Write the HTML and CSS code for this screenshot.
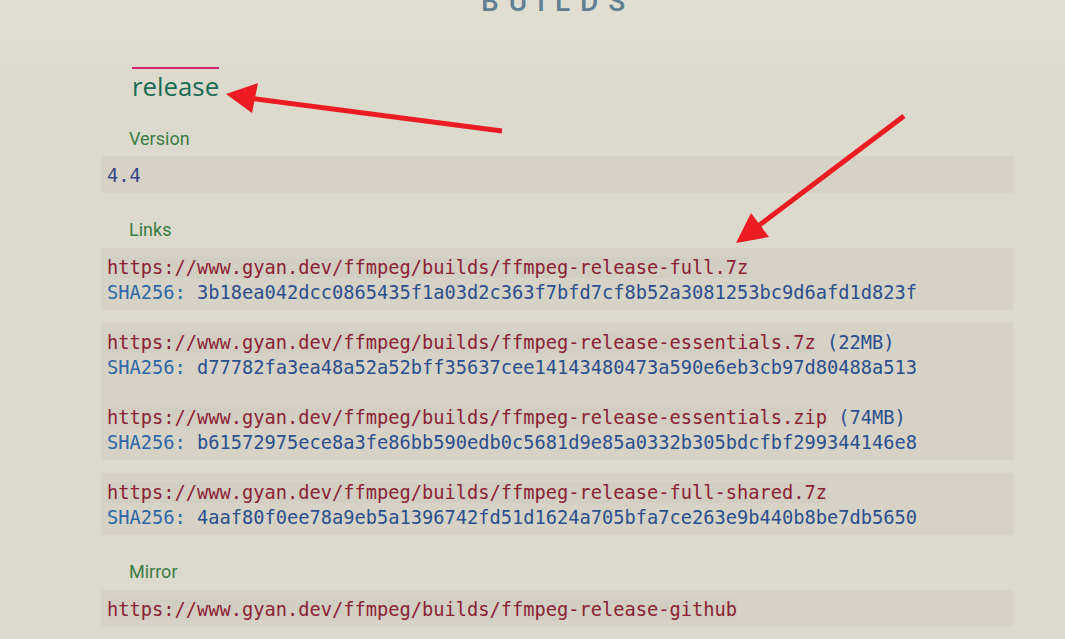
FILE: index.html
```html
<!DOCTYPE html>
<html lang="en">
<head>
<meta charset="utf-8">
<title>Builds</title>
<link rel="stylesheet" href="styles.css">
</head>
<body>
<header class="band">
  <h1 class="site-title">BUILDS</h1>
</header>
<main class="content">
  <h2 class="heading">release</h2>

  <div class="label first">Version</div>
  <div class="block"><div class="line version">4.4</div></div>

  <div class="label">Links</div>
  <div class="block">
    <div class="line"><a class="link">https://www.gyan.dev/ffmpeg/builds/ffmpeg-release-full.7z</a></div>
    <div class="line"><span class="sha">SHA256:</span> <span class="hash">3b18ea042dcc0865435f1a03d2c363f7bfd7cf8b52a3081253bc9d6afd1d823f</span></div>
  </div>
  <div class="block">
    <div class="line"><a class="link">https://www.gyan.dev/ffmpeg/builds/ffmpeg-release-essentials.7z</a> <span class="hash">(22MB)</span></div>
    <div class="line"><span class="sha">SHA256:</span> <span class="hash">d77782fa3ea48a52a52bff35637cee14143480473a590e6eb3cb97d80488a513</span></div>
    <div class="line blank"></div>
    <div class="line"><a class="link">https://www.gyan.dev/ffmpeg/builds/ffmpeg-release-essentials.zip</a> <span class="hash">(74MB)</span></div>
    <div class="line"><span class="sha">SHA256:</span> <span class="hash">b61572975ece8a3fe86bb590edb0c5681d9e85a0332b305bdcfbf299344146e8</span></div>
  </div>
  <div class="block">
    <div class="line"><a class="link">https://www.gyan.dev/ffmpeg/builds/ffmpeg-release-full-shared.7z</a></div>
    <div class="line"><span class="sha">SHA256:</span> <span class="hash">4aaf80f0ee78a9eb5a1396742fd51d1624a705bfa7ce263e9b440b8be7db5650</span></div>
  </div>

  <div class="label">Mirror</div>
  <div class="block">
    <div class="line"><a class="link">https://www.gyan.dev/ffmpeg/builds/ffmpeg-release-github</a></div>
  </div>
</main>

<svg class="annotations" viewBox="0 0 1065 639" width="1065" height="639" aria-hidden="true">
  <line x1="502" y1="131" x2="248" y2="98" stroke="#ed1c24" stroke-width="5"/>
  <polygon points="226,94 258,83 252,113" fill="#ed1c24"/>
  <line x1="904" y1="116" x2="757" y2="227" stroke="#ed1c24" stroke-width="5"/>
  <polygon points="736,243 751,213 769,237" fill="#ed1c24"/>
</svg>
</body>
</html>
```

FILE: styles.css
```css
html, body {
  margin: 0;
  padding: 0;
}

body {
  width: 1065px;
  height: 639px;
  overflow: hidden;
  position: relative;
  font-family: Roboto, "Liberation Sans", sans-serif;
  background: linear-gradient(to bottom, #e0ddd1 0, #e0ddd1 36px, #dfdcd0 37px, #dcd9cd 80px, #dcd9cd 100%);
}

.band {
  height: 36px;
  overflow: hidden;
  padding-left: 481px;
}

.site-title {
  margin: -12px 0 0 0;
  font-family: Roboto, "Liberation Sans", sans-serif;
  font-size: 28px;
  line-height: 28px;
  font-weight: 500;
  letter-spacing: 10px;
  color: #5f7f93;
}

.content {
  width: 912px;
  padding-left: 101px;
}

.heading {
  display: inline-block;
  margin: 31px 0 0 31px;
  padding-top: 2px;
  border-top: 2px solid #d4236f;
  font-family: "Open Sans", "Noto Sans", sans-serif;
  font-weight: 400;
  font-size: 25.8px;
  line-height: 30px;
  color: #1a6b55;
}

.label {
  margin: 25px 0 6px 28px;
  font-size: 18px;
  line-height: 24px;
  color: #3b7c45;
}

.label.first {
  margin-top: 26px;
  margin-bottom: 5px;
}

.block {
  background: #d6d2c6;
  padding: 7px 6px 5px;
  font-family: "DejaVu Sans Mono", "Liberation Mono", monospace;
  font-size: 18.7px;
  line-height: 25px;
}

.block + .block {
  margin-top: 13px;
}

.line {
  white-space: pre;
  height: 25px;
}

.version {
  color: #3a4488;
}

.link {
  color: #8b2233;
  background: #d2cec2;
  text-decoration: none;
}

.sha {
  color: #2e67a7;
}

.hash {
  color: #2b4f8e;
}

.annotations {
  position: absolute;
  left: 0;
  top: 0;
  pointer-events: none;
}
```
